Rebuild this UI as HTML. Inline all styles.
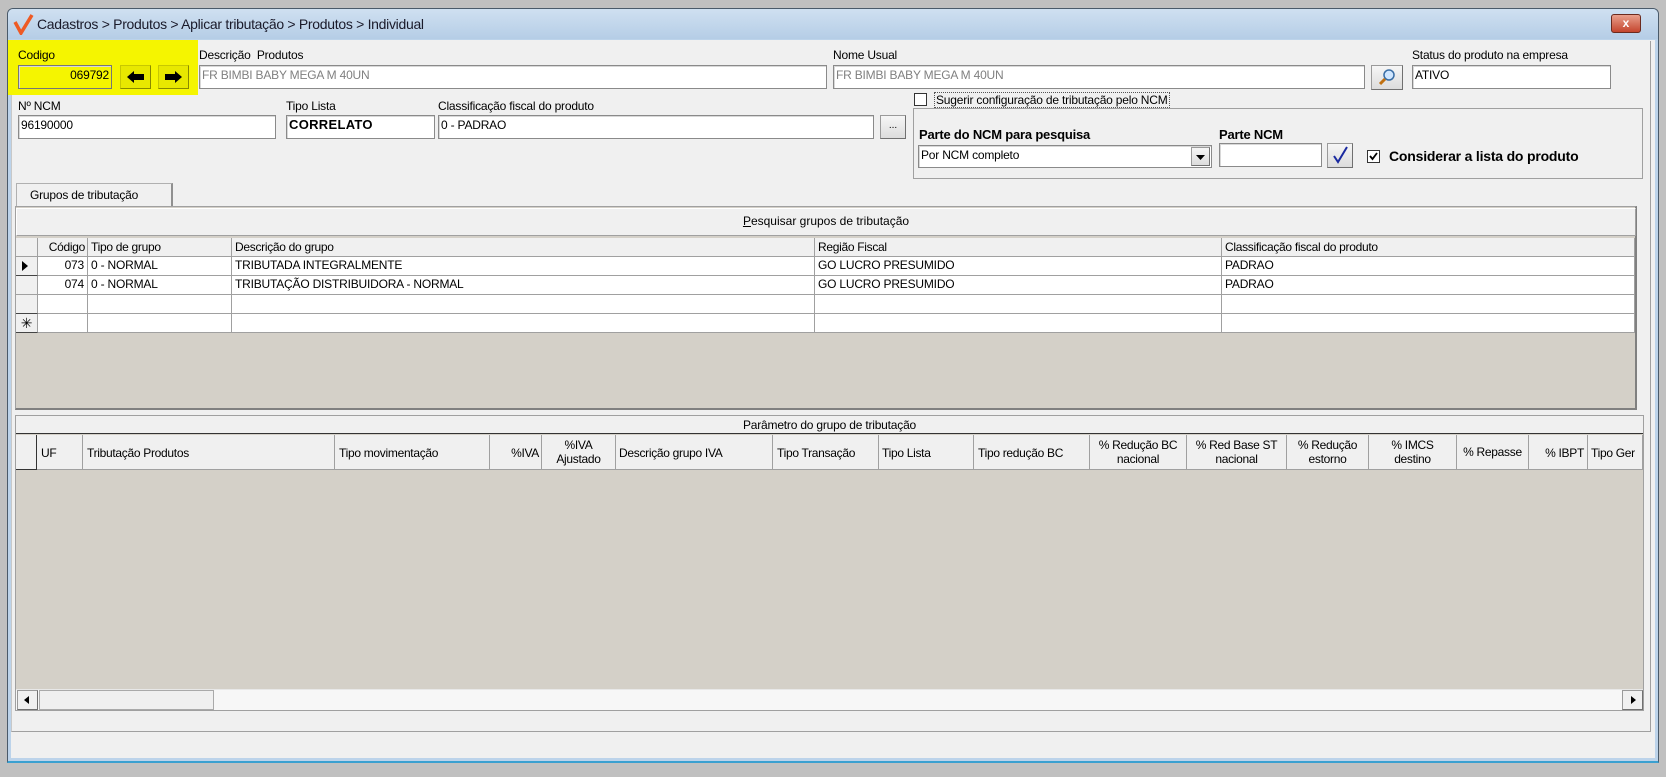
<!DOCTYPE html>
<html><head><meta charset="utf-8"><style>
*{box-sizing:border-box;margin:0;padding:0}
body{width:1666px;height:777px;background:#c0c0c0;position:relative;overflow:hidden;font-family:"Liberation Sans",sans-serif;font-size:12px;color:#000}
.a{position:absolute}
.lbl{position:absolute;font-size:12px;white-space:nowrap;letter-spacing:-0.2px}
.inp{position:absolute;background:#fff;border:1px solid #8a8a8a;box-shadow:inset 1px 1px 0 #d8d8d8;font-size:12px;padding:2px 2px;white-space:nowrap;overflow:hidden;letter-spacing:-0.2px}
.btn{position:absolute;background:linear-gradient(#f6f6f6,#dcdcdc);border:1px solid #9a9a9a;border-right-color:#707070;border-bottom-color:#707070}
.th{position:absolute;background:#f0f0f0;border-right:1px solid #a0a0a0;border-bottom:1px solid #a0a0a0;font-size:12px;white-space:nowrap;overflow:hidden;letter-spacing:-0.3px}
.td{position:absolute;background:#fff;border-right:1px solid #a0a0a0;border-bottom:1px solid #a0a0a0;font-size:12px;white-space:nowrap;overflow:hidden;padding:1px 3px;letter-spacing:-0.2px}
.c2{display:flex;align-items:center;justify-content:center;text-align:center;line-height:14px}
</style></head><body>
<div class="a" style="left:7px;top:8px;width:1652px;height:755px;background:#bcd3ea;border:1px solid #4a5a6a;border-radius:6px 6px 0 0;border-bottom:2px solid #3aa0d0"></div>
<div class="a" style="left:8px;top:9px;width:1650px;height:30px;background:linear-gradient(#cfe0f1,#b5cde6);border-radius:5px 5px 0 0"></div>
<svg class="a" style="left:13px;top:13px" width="22" height="22" viewBox="0 0 22 22"><path d="M2 9 L8 20 L19 2" stroke="#ee5a24" stroke-width="3.5" fill="none"/></svg>
<div class="lbl" style="left:37px;top:16px;font-size:14px;color:#1a1a2a;letter-spacing:-0.3px">Cadastros &gt; Produtos &gt; Aplicar tributação &gt; Produtos &gt; Individual</div>
<div class="a" style="left:1611px;top:14px;width:30px;height:19px;background:linear-gradient(#e9a08c,#c4452e);border:1px solid #6b2a1e;border-radius:3px;color:#fff;font-weight:bold;font-size:12px;text-align:center;line-height:17px">x</div>
<div class="a" style="left:11px;top:40px;width:1644px;height:718px;background:#f0f0f0"></div>
<div class="a" style="left:11px;top:41px;width:1640px;height:691px;border:1px solid #a0a0a0;border-top:none;border-left:1px solid #c8c8c8"></div>
<div class="a" style="left:8px;top:40px;width:190px;height:55px;background:#f5f500"></div>
<div class="lbl" style="left:18px;top:48px">Codigo</div>
<div class="inp" style="left:18px;top:65px;width:94px;height:24px;background:#f5f500;text-align:right;border-color:#777">069792</div>
<div class="btn" style="left:120px;top:65px;width:31px;height:24px;background:#e8e800;border-color:#c8c800 #8a8a00 #8a8a00 #c8c800"><svg width="29" height="22"><path d="M6 11 L13 5 V8 H23 V14 H13 V17 Z" fill="#000"/></svg></div>
<div class="btn" style="left:158px;top:65px;width:31px;height:24px;background:#e8e800;border-color:#c8c800 #8a8a00 #8a8a00 #c8c800"><svg width="29" height="22"><path d="M23 11 L16 5 V8 H6 V14 H16 V17 Z" fill="#000"/></svg></div>
<div class="lbl" style="left:199px;top:48px">Descrição &nbsp;Produtos</div>
<div class="inp" style="left:199px;top:65px;width:628px;height:24px;color:#808080">FR BIMBI BABY MEGA M 40UN</div>
<div class="lbl" style="left:833px;top:48px">Nome Usual</div>
<div class="inp" style="left:833px;top:65px;width:532px;height:24px;color:#808080">FR BIMBI BABY MEGA M 40UN</div>
<div class="btn" style="left:1371px;top:65px;width:32px;height:25px"><svg width="30" height="23"><circle cx="17" cy="9" r="5" fill="#cfe6ff" stroke="#3a6ea5" stroke-width="1.5"/><path d="M13 13 L8 18" stroke="#c07010" stroke-width="3"/></svg></div>
<div class="lbl" style="left:1412px;top:48px">Status do produto na empresa</div>
<div class="inp" style="left:1412px;top:65px;width:199px;height:24px">ATIVO</div>
<div class="lbl" style="left:18px;top:99px">Nº NCM</div>
<div class="inp" style="left:18px;top:115px;width:258px;height:24px">96190000</div>
<div class="lbl" style="left:286px;top:99px">Tipo Lista</div>
<div class="inp" style="left:286px;top:115px;width:149px;height:24px;font-weight:bold;font-size:13px;padding-top:1px;letter-spacing:0.3px">CORRELATO</div>
<div class="lbl" style="left:438px;top:99px">Classificação fiscal do produto</div>
<div class="inp" style="left:438px;top:115px;width:436px;height:24px">0 - PADRAO</div>
<div class="btn" style="left:880px;top:115px;width:26px;height:24px;text-align:center;font-size:10px;line-height:20px">...</div>
<div class="a" style="left:913px;top:108px;width:730px;height:71px;border:1px solid #a0a0a0"></div>
<div class="a" style="left:914px;top:93px;width:13px;height:13px;border:1px solid #333;background:#fff"></div>
<div class="lbl" style="left:934px;top:92px;background:#f0f0f0;border:1px dotted #555;padding:0 1px">Sugerir configuração de tributação pelo NCM</div>
<div class="lbl" style="left:919px;top:127px;font-weight:bold;font-size:13px">Parte do NCM para pesquisa</div>
<div class="inp" style="left:918px;top:145px;width:294px;height:23px">Por NCM completo</div>
<div class="btn" style="left:1191px;top:147px;width:19px;height:19px"><svg width="17" height="17"><path d="M4 7 H13 L8.5 12 Z" fill="#000"/></svg></div>
<div class="lbl" style="left:1219px;top:127px;font-weight:bold;font-size:13px">Parte NCM</div>
<div class="inp" style="left:1219px;top:143px;width:103px;height:24px"></div>
<div class="btn" style="left:1327px;top:143px;width:26px;height:25px"><svg width="24" height="23"><path d="M6 12 L10 18 L19 3" stroke="#1a2aa0" stroke-width="2" fill="none"/></svg></div>
<div class="a" style="left:1367px;top:150px;width:13px;height:13px;border:1px solid #333;background:#fff"><svg width="11" height="11"><path d="M2 5 L4.5 8 L9 2" stroke="#000" stroke-width="1.8" fill="none"/></svg></div>
<div class="lbl" style="left:1389px;top:148px;font-weight:bold;font-size:14px">Considerar a lista do produto</div>
<div class="a" style="left:16px;top:183px;width:157px;height:24px;background:#f0f0f0;border:1px solid #b0b0b0;border-bottom:none;border-right:2px solid #909090"></div>
<div class="lbl" style="left:30px;top:188px">Grupos de tributação</div>
<div class="a" style="left:15px;top:206px;width:1622px;height:204px;border:1px solid #a0a0a0;border-right:2px solid #808080;border-bottom:2px solid #808080;background:#d4d0c8"></div>
<div class="btn" style="left:16px;top:208px;width:1620px;height:28px;background:#f0f0f0;border-color:#fff #a0a0a0 #a0a0a0 #fff;text-align:center;line-height:24px"><u>P</u>esquisar grupos de tributação</div>
<div class="th" style="left:16px;top:238px;width:22px;height:19px"></div>
<div class="th" style="left:38px;top:238px;width:50px;height:19px;text-align:right;padding:2px 2px">Código</div>
<div class="th" style="left:88px;top:238px;width:144px;height:19px;padding:2px 3px">Tipo de grupo</div>
<div class="th" style="left:232px;top:238px;width:583px;height:19px;padding:2px 3px">Descrição do grupo</div>
<div class="th" style="left:815px;top:238px;width:407px;height:19px;padding:2px 3px">Região Fiscal</div>
<div class="th" style="left:1222px;top:238px;width:413px;height:19px;padding:2px 3px">Classificação fiscal do produto</div>
<div class="th" style="left:16px;top:257px;width:22px;height:19px;border-bottom:1px solid #444"><svg width="20" height="18"><path d="M6 4 L12 9 L6 14 Z" fill="#000"/></svg></div>
<div class="th" style="left:16px;top:276px;width:22px;height:19px"></div>
<div class="th" style="left:16px;top:295px;width:22px;height:19px;border-bottom:1px solid #444"></div>
<div class="th" style="left:16px;top:314px;width:22px;height:19px;border-bottom:1px solid #444;text-align:center;font-size:14px;line-height:18px">✳</div>
<div class="td" style="left:38px;top:257px;width:50px;height:19px;text-align:right">073</div>
<div class="td" style="left:88px;top:257px;width:144px;height:19px">0 - NORMAL</div>
<div class="td" style="left:232px;top:257px;width:583px;height:19px">TRIBUTADA INTEGRALMENTE</div>
<div class="td" style="left:815px;top:257px;width:407px;height:19px">GO LUCRO PRESUMIDO</div>
<div class="td" style="left:1222px;top:257px;width:413px;height:19px">PADRAO</div>
<div class="td" style="left:38px;top:276px;width:50px;height:19px;text-align:right">074</div>
<div class="td" style="left:88px;top:276px;width:144px;height:19px">0 - NORMAL</div>
<div class="td" style="left:232px;top:276px;width:583px;height:19px">TRIBUTAÇÃO DISTRIBUIDORA - NORMAL</div>
<div class="td" style="left:815px;top:276px;width:407px;height:19px">GO LUCRO PRESUMIDO</div>
<div class="td" style="left:1222px;top:276px;width:413px;height:19px">PADRAO</div>
<div class="td" style="left:38px;top:295px;width:50px;height:19px"></div><div class="td" style="left:88px;top:295px;width:144px;height:19px"></div><div class="td" style="left:232px;top:295px;width:583px;height:19px"></div><div class="td" style="left:815px;top:295px;width:407px;height:19px"></div><div class="td" style="left:1222px;top:295px;width:413px;height:19px"></div>
<div class="td" style="left:38px;top:314px;width:50px;height:19px"></div><div class="td" style="left:88px;top:314px;width:144px;height:19px"></div><div class="td" style="left:232px;top:314px;width:583px;height:19px"></div><div class="td" style="left:815px;top:314px;width:407px;height:19px"></div><div class="td" style="left:1222px;top:314px;width:413px;height:19px"></div>
<div class="a" style="left:15px;top:415px;width:1629px;height:296px;border:1px solid #a0a0a0;background:#d4d0c8"></div>
<div class="a" style="left:16px;top:416px;width:1627px;height:18px;background:#f0f0f0;border-bottom:1px solid #333;text-align:center;font-size:12px;line-height:18px;letter-spacing:-0.2px">Parâmetro do grupo de tributação</div>
<div class="th" style="left:16px;top:435px;width:21px;height:35px;border-right:1px solid #333;border-bottom:1px solid #333"></div>
<div class="th" style="left:37px;top:435px;width:46px;height:35px;padding:11px 4px">UF</div>
<div class="th" style="left:83px;top:435px;width:252px;height:35px;padding:11px 4px">Tributação Produtos</div>
<div class="th" style="left:335px;top:435px;width:155px;height:35px;padding:11px 4px">Tipo movimentação</div>
<div class="th" style="left:490px;top:435px;width:52px;height:35px;padding:11px 2px;text-align:right">%IVA</div>
<div class="th c2" style="left:542px;top:435px;width:74px;height:35px">%IVA<br>Ajustado</div>
<div class="th" style="left:616px;top:435px;width:157px;height:35px;padding:11px 3px">Descrição grupo IVA</div>
<div class="th" style="left:773px;top:435px;width:106px;height:35px;padding:11px 4px">Tipo Transação</div>
<div class="th" style="left:879px;top:435px;width:95px;height:35px;padding:11px 3px">Tipo Lista</div>
<div class="th" style="left:974px;top:435px;width:116px;height:35px;padding:11px 4px">Tipo redução BC</div>
<div class="th c2" style="left:1090px;top:435px;width:97px;height:35px">% Redução BC<br>nacional</div>
<div class="th c2" style="left:1187px;top:435px;width:100px;height:35px">% Red Base ST<br>nacional</div>
<div class="th c2" style="left:1287px;top:435px;width:82px;height:35px">% Redução<br>estorno</div>
<div class="th c2" style="left:1369px;top:435px;width:88px;height:35px">% IMCS<br>destino</div>
<div class="th c2" style="left:1457px;top:435px;width:72px;height:35px">% Repasse</div>
<div class="th" style="left:1529px;top:435px;width:59px;height:35px;padding:11px 3px;text-align:right">% IBPT</div>
<div class="th" style="left:1588px;top:435px;width:55px;height:35px;padding:11px 3px">Tipo Ger</div>
<div class="a" style="left:16px;top:689px;width:1627px;height:21px;background:#f7f7f7;border-top:1px solid #e8e8e8"></div>
<div class="btn" style="left:17px;top:690px;width:21px;height:20px;background:#f0f0f0"><svg width="19" height="18"><path d="M11 5 L6 9 L11 13 Z" fill="#000"/></svg></div>
<div class="btn" style="left:39px;top:690px;width:175px;height:20px;background:#f0f0f0;border-color:#aaa"></div>
<div class="btn" style="left:1622px;top:690px;width:21px;height:20px;background:#f0f0f0"><svg width="19" height="18"><path d="M8 5 L13 9 L8 13 Z" fill="#000"/></svg></div>
</body></html>
